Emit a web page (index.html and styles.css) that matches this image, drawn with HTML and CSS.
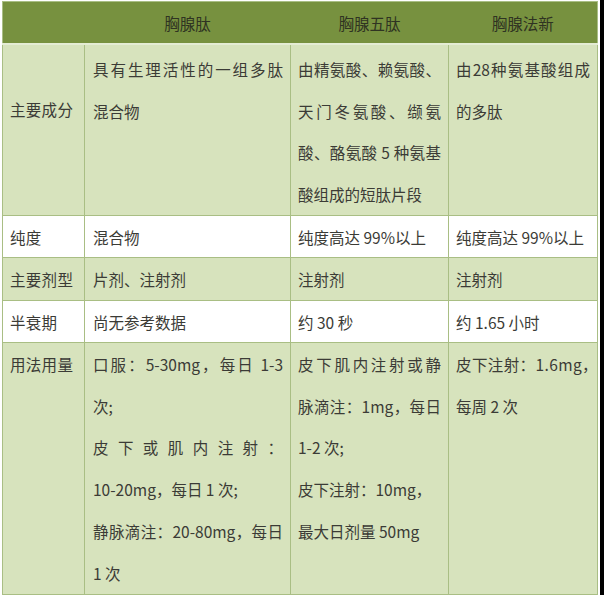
FILE: index.html
```html
<!DOCTYPE html>
<html lang="zh-CN">
<head>
<meta charset="utf-8">
<title>胸腺肽对比</title>
<link rel="stylesheet" href="styles.css">
</head>
<body>
<div class="frame">
  <div class="sheet">
    <table class="grid">
      <colgroup>
        <col class="c1"><col class="c2"><col class="c3"><col class="c4">
      </colgroup>
      <thead>
        <tr class="head">
          <th></th>
          <th>胸腺肽</th>
          <th>胸腺五肽</th>
          <th>胸腺法新</th>
        </tr>
      </thead>
      <tbody>
        <tr class="r1 green">
          <td class="label mid2">主要成分</td>
          <td><span class="j">具有生理活性的一组多肽</span><span class="l">混合物</span></td>
          <td><span class="j">由精氨酸、赖氨酸、</span><span class="j">天门冬氨酸、缬氨</span><span class="j">酸、酪氨酸 5 种氨基</span><span class="l">酸组成的短肽片段</span></td>
          <td><span class="j">由28种氨基酸组成</span><span class="l">的多肽</span></td>
        </tr>
        <tr class="r2 white single">
          <td class="label">纯度</td>
          <td>混合物</td>
          <td>纯度高达 99%以上</td>
          <td>纯度高达 99%以上</td>
        </tr>
        <tr class="r3 green single">
          <td class="label">主要剂型</td>
          <td>片剂、注射剂</td>
          <td>注射剂</td>
          <td>注射剂</td>
        </tr>
        <tr class="r4 white single">
          <td class="label">半衰期</td>
          <td>尚无参考数据</td>
          <td>约 30 秒</td>
          <td>约 1.65 小时</td>
        </tr>
        <tr class="r5 green">
          <td class="label">用法用量</td>
          <td><span class="j">口服：5-30mg，每日 1-3</span><span class="l">次;</span><span class="j">皮下或肌内注射：</span><span class="l">10-20mg，每日 1 次;</span><span class="j">静脉滴注：20-80mg，每日</span><span class="l">1 次</span></td>
          <td><span class="j">皮下肌内注射或静</span><span class="j">脉滴注：1mg，每日</span><span class="l">1-2 次;</span><span class="l">皮下注射：10mg，</span><span class="l">最大日剂量 50mg</span></td>
          <td><span class="l tight">皮下注射：1.6mg，</span><span class="l">每周 2 次</span></td>
        </tr>
      </tbody>
    </table>
  </div>
  <div class="edge"></div>
</div>
</body>
</html>
```

FILE: styles.css
```css
html, body {
  margin: 0;
  padding: 0;
  background: #ffffff;
}

.frame {
  display: flex;
  width: 604px;
  height: 595px;
  overflow: hidden;
}

.sheet {
  width: 600px;
  padding: 1px 0 0 2px;
  box-sizing: border-box;
}

.edge {
  width: 4px;
  height: 595px;
  background: #000000;
}

.grid {
  border-collapse: collapse;
  table-layout: fixed;
  width: 595px;
  font-family: "Noto Sans CJK SC", "Noto Sans", sans-serif;
  font-size: 15.5px;
  color: #3b3b36;
  border: 1px solid #a9be84;
}

.c1 { width: 82px; }
.c2 { width: 206px; }
.c3 { width: 158px; }
.c4 { width: 149px; }

.head th {
  height: 41px;
  padding: 0;
  background: #77913f;
  color: #2f3322;
  font-weight: normal;
  font-size: 15.5px;
  text-align: center;
  vertical-align: middle;
  border: none;
  border-bottom: 2px solid #e4ecd4;
}

.grid td {
  border: 1px solid #a9be84;
  padding: 0 7px 0 7px;
  vertical-align: top;
  line-height: 41.5px;
  text-align: left;
}

.grid td:nth-child(2) {
  padding-left: 8px;
}

.green td { background: #d7e3bd; }
.white td { background: #ffffff; }

.r1 { height: 169px; }
.r1 td { padding-top: 4px; }
.r1 td.mid2 { padding-top: 44px; }

.single { height: 42px; }
.single td {
  vertical-align: middle;
  line-height: 40px;
}

.r3 { height: 43px; }

.r5 { height: 251px; }
.r5 td { padding-top: 1px; line-height: 41.7px; }

.l {
  display: block;
  white-space: nowrap;
}

.tight {
  letter-spacing: 0.4px;
}

.j {
  display: block;
  white-space: normal;
  text-align: justify;
  text-align-last: justify;
}

.label {
  letter-spacing: 0.3px;
}
```
